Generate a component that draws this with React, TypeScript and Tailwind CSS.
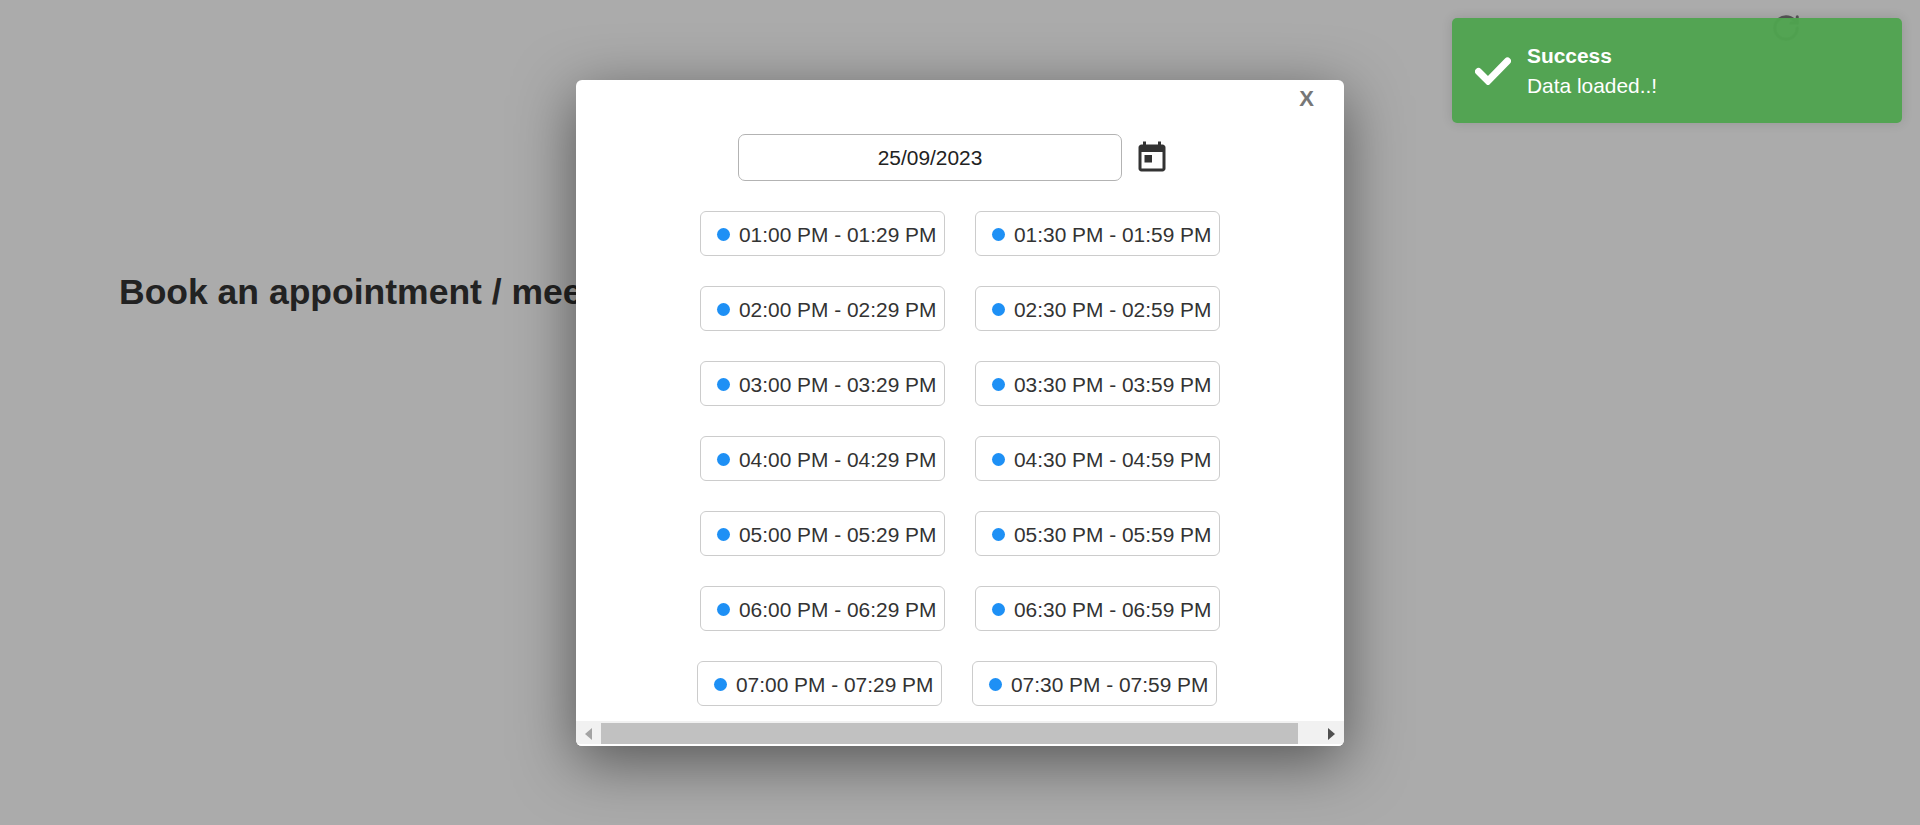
import React from 'react';
import { RotateCw } from 'lucide-react';

const SLOT_ROWS = [
    ['01:00 PM - 01:29 PM', '01:30 PM - 01:59 PM'],
    ['02:00 PM - 02:29 PM', '02:30 PM - 02:59 PM'],
    ['03:00 PM - 03:29 PM', '03:30 PM - 03:59 PM'],
    ['04:00 PM - 04:29 PM', '04:30 PM - 04:59 PM'],
    ['05:00 PM - 05:29 PM', '05:30 PM - 05:59 PM'],
    ['06:00 PM - 06:29 PM', '06:30 PM - 06:59 PM'],
    ['07:00 PM - 07:29 PM', '07:30 PM - 07:59 PM'],
];

function Slot({ label }: { label: string }) {
    return (
        <button className="flex items-center w-[245px] h-[45px] pl-[16px] pt-[2px] bg-white border border-[#ccc] rounded-[6px] text-[#333] whitespace-nowrap overflow-hidden">
            <span className="w-[13px] h-[13px] mr-[9px] rounded-full bg-[#1e90f5] shrink-0" />
            {label}
        </button>
    );
}

function ScrollBar() {
    return (
        <div className="flex items-center h-[25px] pt-[2px] mt-auto bg-[#f1f1f1] border-b-2 border-white">
            <div className="flex items-center justify-center w-[25px] h-full">
                <svg width="7" height="12" viewBox="0 0 7 12"><path d="M7 0v12L0 6z" fill="#a3a3a3" /></svg>
            </div>
            <div className="w-[697px] h-[21px] bg-[#c1c1c1]" />
            <div className="flex flex-1 items-center justify-end pr-[9px] h-full">
                <svg width="7" height="12" viewBox="0 0 7 12"><path d="M0 0v12l7-6z" fill="#505050" /></svg>
            </div>
        </div>
    );
}

export default function App() {
    return (
        <div className="relative h-screen overflow-hidden bg-white text-[20.9px] font-['Liberation_Sans',Arial,sans-serif]">
            <h2 className="pt-[271px] pl-[119px] text-[35.5px] leading-[42px] font-bold text-[#333]">
                Book an appointment / meeting
            </h2>

            <div className="absolute inset-0 bg-black/33 flex justify-center items-start pt-[80px]">
                <div className="flex flex-col w-[768px] h-[666px] bg-white rounded-[6px] overflow-hidden shadow-[0_15px_60px_rgba(0,0,0,0.5)]">
                    <div className="flex justify-end h-[54px] pr-[30px] pt-[6px] text-[22px] leading-[26px] font-bold text-[#777]">X</div>
                    <div className="flex items-center justify-center pr-[39px]">
                        <input
                            readOnly
                            value="25/09/2023"
                            className="w-[384px] h-[47px] text-center text-[#222] border border-[#b3b3b3] rounded-[7px] outline-none"
                        />
                        <svg className="ml-[12px] mr-[-27px] w-[36px] h-[36px] fill-[#333]" viewBox="0 0 24 24">
                            <path d="M19 3h-1V1h-2v2H8V1H6v2H5c-1.11 0-1.99.9-1.99 2L3 19c0 1.1.89 2 2 2h14c1.1 0 2-.9 2-2V5c0-1.1-.9-2-2-2zm0 16H5V8h14v11zM7 10h5v5H7z" />
                        </svg>
                    </div>
                    <div className="flex flex-col gap-[30px] mt-[30px]">
                        {SLOT_ROWS.map((row, i) => (
                            <div key={row[0]} className={`flex justify-center gap-[30px] ${i === 6 ? 'pr-[6px]' : ''}`}>
                                {row.map((label) => <Slot key={label} label={label} />)}
                            </div>
                        ))}
                    </div>
                    <ScrollBar />
                </div>
            </div>

            <RotateCw className="absolute top-[13px] left-[1771px] w-[30px] h-[30px] text-[#555]" strokeWidth={2.4} />

            <div className="absolute top-[18px] right-[18px] flex items-center w-[450px] h-[105px] pl-[23px] bg-[#50a350]/97 rounded-[5px] text-white shadow-[0_0_12px_rgba(0,0,0,0.12)]">
                <svg className="w-[36px] h-[28px] mr-[16px]" viewBox="0 0 36 28">
                    <path d="M3.5 14.5 13 24 32.5 4" fill="none" stroke="currentColor" strokeWidth="7" strokeLinecap="round" />
                </svg>
                <div className="leading-[30px]">
                    <div className="font-bold">Success</div>
                    <div>Data loaded..!</div>
                </div>
            </div>
        </div>
    );
}
